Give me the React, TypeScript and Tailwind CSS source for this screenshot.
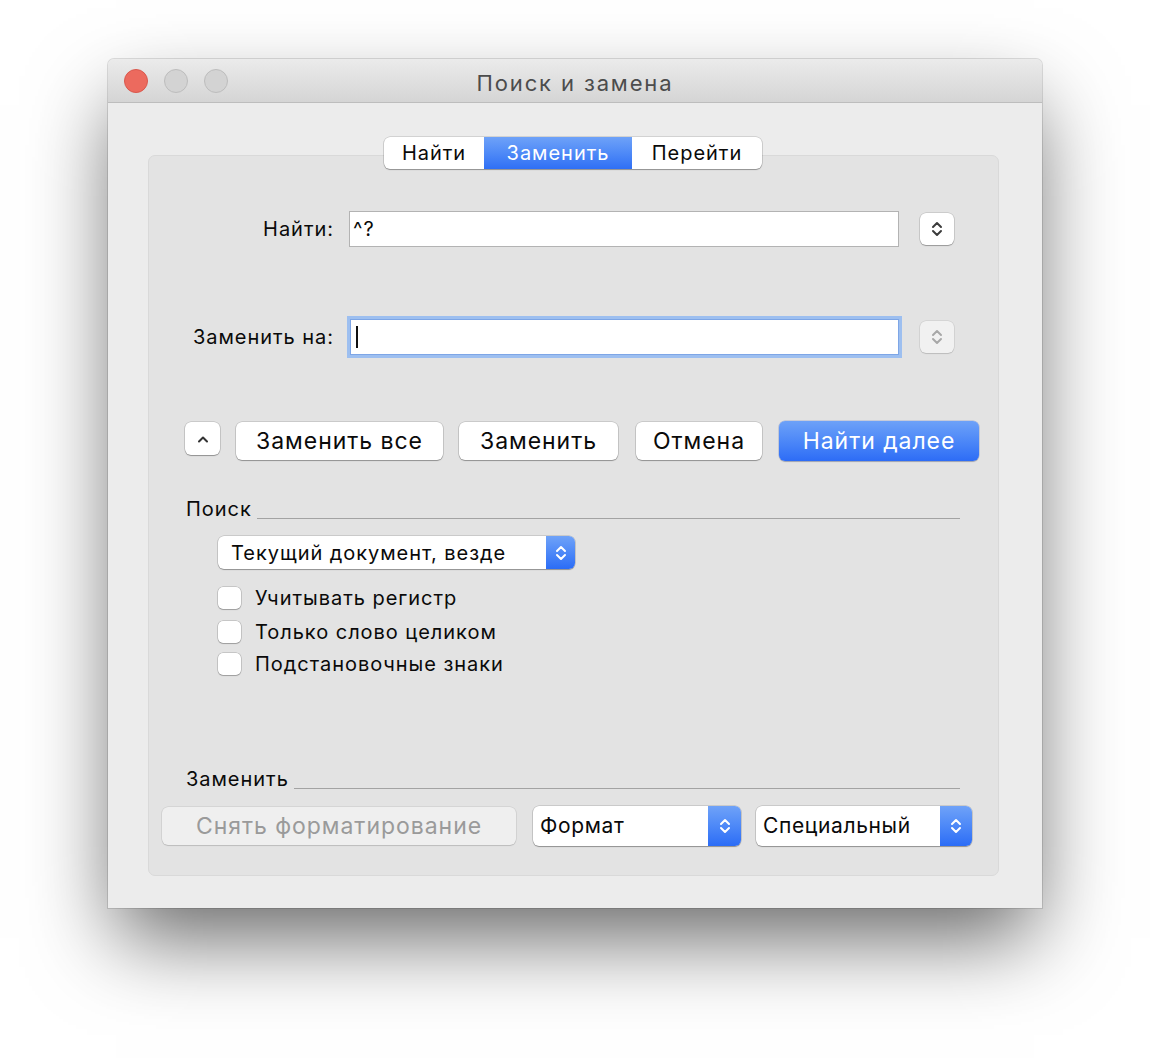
import React from "react";

const font = { fontFamily: "Inter, 'Noto Sans', sans-serif" };

function Chevrons({ color = "#ffffff", w = 12, h = 18 }: { color?: string; w?: number; h?: number }) {
  return (
    <svg width={w} height={h} viewBox="0 0 12 18" fill="none">
      <path d="M2 7 L6 3 L10 7" stroke={color} strokeWidth="2" strokeLinecap="round" strokeLinejoin="round" />
      <path d="M2 11 L6 15 L10 11" stroke={color} strokeWidth="2" strokeLinecap="round" strokeLinejoin="round" />
    </svg>
  );
}

function Stepper({ disabled }: { disabled?: boolean }) {
  return (
    <div
      className={
        "w-[34px] h-[32px] rounded-[6px] flex items-center justify-center " +
        (disabled
          ? "bg-[#f1f1f1] shadow-[0_0_0_0.5px_rgba(0,0,0,0.12),0_1px_1px_rgba(0,0,0,0.12)]"
          : "bg-white shadow-[0_0_0_0.5px_rgba(0,0,0,0.2),0_1px_1px_rgba(0,0,0,0.25)]")
      }
    >
      <Chevrons color={disabled ? "#a8a8a8" : "#3c3c3c"} />
    </div>
  );
}

function Btn({ children, className = "" }: { children: React.ReactNode; className?: string }) {
  return (
    <div
      className={
        "h-[38px] rounded-[6px] bg-white flex items-center justify-center text-[23px] text-[#0a0a0a] shadow-[0_0_0_0.5px_rgba(0,0,0,0.22),0_1px_1px_rgba(0,0,0,0.28)] " +
        className
      }
    >
      {children}
    </div>
  );
}

function Popup({ label, width, blue, text = "text-[21px] tracking-[0.03em]", pl = "pl-[7px]" }: { label: string; width: string; blue: string; text?: string; pl?: string }) {
  return (
    <div
      className={
        "flex rounded-[6px] bg-white overflow-hidden shadow-[0_0_0_0.5px_rgba(0,0,0,0.22),0_1px_1px_rgba(0,0,0,0.28)] " + width
      }
    >
      <div className={"flex-1 flex items-center text-[#0a0a0a] " + text + " " + pl}>{label}</div>
      <div className={"flex items-center justify-center bg-gradient-to-b from-[#6fa2f8] to-[#2b6cf6] " + blue}>
        <Chevrons color="#ffffff" />
      </div>
    </div>
  );
}

function Check({ label }: { label: string }) {
  return (
    <div className="flex items-center h-[22px]">
      <div className="w-[23px] h-[22px] rounded-[5px] bg-white shadow-[0_0_0_0.5px_rgba(0,0,0,0.25),0_1px_1px_rgba(0,0,0,0.2)]" />
      <div className="ml-[14px] text-[20px] text-[#0a0a0a]">{label}</div>
    </div>
  );
}

export default function App() {
  return (
    <div className="w-[1150px] h-[1064px] bg-white pt-[59px] pl-[108px] tracking-[0.06em]" style={font}>
      <div className="w-[934px] h-[849px] rounded-t-[6px] bg-[#ececec] flex flex-col shadow-[0_38px_80px_-8px_rgba(0,0,0,0.6),0_0_0_1px_rgba(0,0,0,0.12)]">
        {/* title bar */}
        <div className="h-[44px] rounded-t-[6px] bg-gradient-to-b from-[#ebebeb] to-[#d5d5d5] border-b border-[#bdbdbd] flex items-center relative">
          <div className="flex items-center gap-[16px] pl-[16px]">
            <div className="w-[24px] h-[24px] rounded-full bg-[#ec6a5e] border border-[#d9584d]" />
            <div className="w-[24px] h-[24px] rounded-full bg-[#d3d3d3] border border-[#bdbdbd]" />
            <div className="w-[24px] h-[24px] rounded-full bg-[#d3d3d3] border border-[#bdbdbd]" />
          </div>
          <div className="absolute inset-0 pt-[5px] flex items-center justify-center text-[22px] tracking-[0.085em] text-[#4c4c4c]">Поиск и замена</div>
        </div>

        {/* body */}
        <div className="flex-1 pt-[34px] pl-[40px] pr-[43px] pb-[32px] flex flex-col">
          {/* tabs */}
          <div className="relative z-10 flex justify-center">
            <div className="ml-[-1px] flex h-[32px] rounded-[6px] bg-white overflow-hidden shadow-[0_0_0_0.5px_rgba(0,0,0,0.22),0_1px_1px_rgba(0,0,0,0.28)] text-[20px]">
              <div className="w-[100px] flex items-center justify-center text-[#0a0a0a]">Найти</div>
              <div className="w-[148px] flex items-center justify-center text-white bg-gradient-to-b from-[#6ea2f8] to-[#2f6ff5]">Заменить</div>
              <div className="w-[130px] flex items-center justify-center text-[#0a0a0a]">Перейти</div>
            </div>
          </div>

          {/* inner box */}
          <div className="flex-1 -mt-[14px] rounded-[7px] bg-[#e3e3e3] border border-[#d9d9d9] flex flex-col">
            {/* find row */}
            <div className="mt-[55px] flex items-center">
              <div className="w-[185px] text-right text-[20px] text-[#0a0a0a]">Найти:</div>
              <div className="ml-[15px] w-[550px] h-[36px] bg-white border border-[#b3b3b3] flex items-center pl-[3px] text-[20px] text-[#0a0a0a]">
                ^?
              </div>
              <div className="ml-[21px]">
                <Stepper />
              </div>
            </div>

            {/* replace row */}
            <div className="mt-[72px] flex items-center">
              <div className="w-[185px] text-right text-[20px] text-[#0a0a0a]">Заменить на:</div>
              <div className="ml-[16px] w-[549px] h-[36px] bg-white border border-[#7ea6e6] shadow-[0_0_0_3px_#9dbff0] flex items-center pl-[5px]">
                <div className="w-[2px] h-[22px] bg-[#111]" />
              </div>
              <div className="ml-[21px]">
                <Stepper disabled />
              </div>
            </div>

            {/* buttons row */}
            <div className="mt-[66px] flex items-center pl-[36px]">
              <div className="w-[35px] h-[33px] rounded-[6px] bg-white flex items-center justify-center shadow-[0_0_0_0.5px_rgba(0,0,0,0.22),0_1px_1px_rgba(0,0,0,0.28)] -mt-[5px]">
                <svg width="12" height="8" viewBox="0 0 12 8" fill="none">
                  <path d="M2 6.5 L6 2.5 L10 6.5" stroke="#333" strokeWidth="2" strokeLinecap="round" strokeLinejoin="round" />
                </svg>
              </div>
              <Btn className="ml-[16px] w-[207px]">Заменить все</Btn>
              <Btn className="ml-[16px] w-[159px]">Заменить</Btn>
              <Btn className="ml-[18px] w-[126px]">Отмена</Btn>
              <div className="ml-[17px] w-[200px] h-[40px] rounded-[6px] flex items-center justify-center text-[23px] text-white bg-gradient-to-b from-[#6da1f8] to-[#2d6cf6] shadow-[0_0_0_0.5px_rgba(0,40,160,0.25),0_1px_1px_rgba(0,0,0,0.2)]">
                Найти далее
              </div>
            </div>

            {/* search section */}
            <div className="mt-[36px] flex items-end pl-[37px] pr-[38px]">
              <div className="text-[20px] text-[#0a0a0a] leading-[24px]">Поиск</div>
              <div className="flex-1 ml-[5px] mb-[2px] h-px bg-[#a3a3a3]" />
            </div>
            <div className="mt-[15px] pl-[69px]">
              <Popup label="Текущий документ, везде" width="w-[357px] h-[33px]" blue="w-[29px]" text="text-[20px]" pl="pl-[13px]" />
            </div>
            <div className="mt-[18px] pl-[69px] flex flex-col gap-[12px]">
              <Check label="Учитывать регистр" />
              <Check label="Только слово целиком" />
              <div className="-mt-[2px]">
                <Check label="Подстановочные знаки" />
              </div>
            </div>

            {/* replace section */}
            <div className="mt-[92px] flex items-end pl-[37px] pr-[38px]">
              <div className="text-[20px] text-[#0a0a0a] leading-[24px]">Заменить</div>
              <div className="flex-1 ml-[5px] mb-[2px] h-px bg-[#a3a3a3]" />
            </div>
            <div className="mt-[15px] flex items-center pl-[13px]">
              <div className="w-[354px] h-[38px] rounded-[6px] bg-[#efefef] flex items-center justify-center text-[23px] text-[#9a9a9a] shadow-[0_0_0_0.5px_rgba(0,0,0,0.12),0_1px_1px_rgba(0,0,0,0.12)]">
                Снять форматирование
              </div>
              <div className="ml-[17px]">
                <Popup label="Формат" width="w-[208px] h-[40px]" blue="w-[33px]" />
              </div>
              <div className="ml-[15px]">
                <Popup label="Специальный" width="w-[216px] h-[40px]" blue="w-[32px]" />
              </div>
            </div>
          </div>
        </div>
      </div>
    </div>
  );
}
